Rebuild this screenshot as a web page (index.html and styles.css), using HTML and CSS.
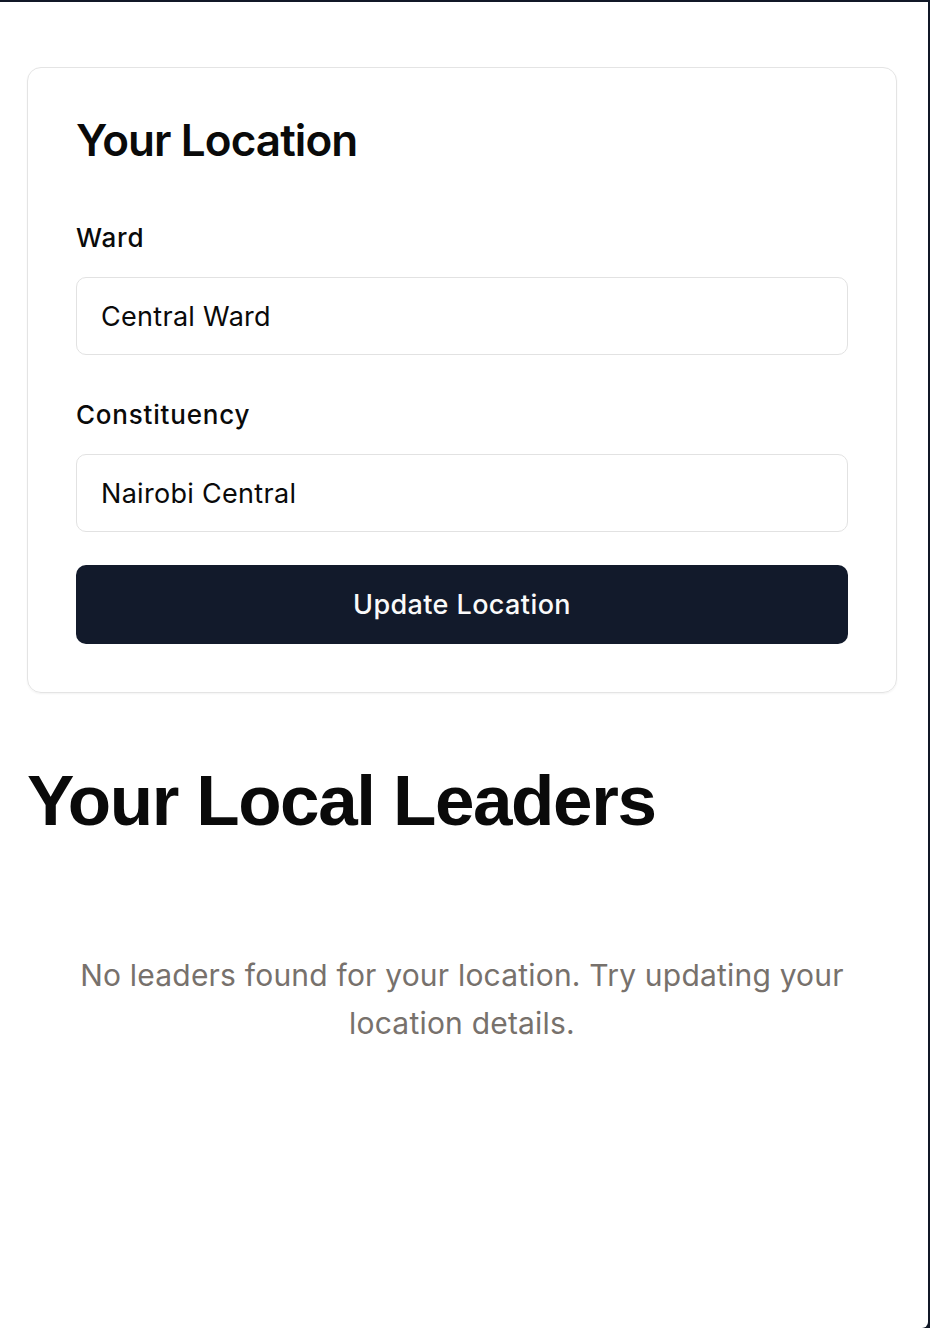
FILE: index.html
```html
<!DOCTYPE html>
<html lang="en">
<head>
<meta charset="utf-8">
<title>Your Location</title>
<link rel="stylesheet" href="styles.css">
</head>
<body>
<div class="frame">
  <main class="page">
    <section class="card">
      <h2 class="card-title">Your Location</h2>
      <form class="form">
        <div class="field">
          <label class="label" for="ward">Ward</label>
          <input class="input" id="ward" type="text" value="Central Ward">
        </div>
        <div class="field">
          <label class="label" for="constituency">Constituency</label>
          <input class="input" id="constituency" type="text" value="Nairobi Central">
        </div>
        <button class="button" type="button">Update Location</button>
      </form>
    </section>
    <h1 class="heading">Your Local Leaders</h1>
    <p class="empty">No leaders found for your location. Try updating your location details.</p>
  </main>
</div>
</body>
</html>
```
FILE: styles.css
```css
* { box-sizing: border-box; }
html, body { margin: 0; padding: 0; }
body {
  background: #111827;
  font-family: Inter, "Noto Sans", sans-serif;
  color: #0a0a0a;
}
.frame {
  background: #ffffff;
  margin: 2px 2px 0 0;
  min-height: calc(100vh - 2px);
  border-bottom-right-radius: 6px;
}
.page {
  padding: 65px 31px 0 27px;
}
.card {
  border: 1.5px solid #e4e4e4;
  border-radius: 14px;
  padding: 48px;
  box-shadow: 0 1px 2px rgba(0,0,0,0.05);
}
.card-title {
  margin: 0;
  font-size: 44px;
  line-height: 48px;
  font-weight: 600;
  letter-spacing: -0.9px;
}
.form {
  display: flex;
  flex-direction: column;
  margin-top: 56px;
}
.field {
  display: flex;
  flex-direction: column;
  gap: 21px;
  margin-bottom: 42px;
}
.field:nth-child(2) { margin-bottom: 33px; }
.label {
  font-size: 26px;
  line-height: 36px;
  font-weight: 500;
  letter-spacing: 0.8px;
}
.input {
  height: 78px;
  border: 1.5px solid #e2e2e2;
  border-radius: 10px;
  padding: 0 24px;
  font-family: inherit;
  font-size: 27px;
  letter-spacing: 0.3px;
  color: #0a0a0a;
  background: #fff;
  outline: none;
}
.button {
  height: 79px;
  border: 0;
  border-radius: 10px;
  background: #121a2b;
  color: #fafafa;
  font-family: inherit;
  font-size: 27px;
  font-weight: 500;
  letter-spacing: 0.4px;
}
.heading {
  margin: 72px 0 0;
  font-family: "Liberation Sans", Arial, sans-serif;
  font-size: 71px;
  line-height: 71px;
  font-weight: 700;
  letter-spacing: -1.4px;
  color: #0a0a0a;
}
.empty {
  margin: 115px 0 0;
  text-align: center;
  font-size: 30px;
  line-height: 48px;
  letter-spacing: 0.2px;
  color: #77716c;
}
```
